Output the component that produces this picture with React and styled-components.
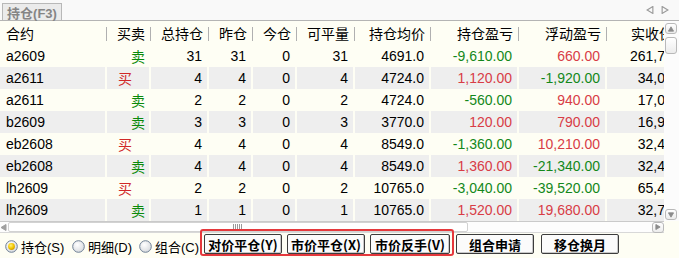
import React from 'react';
import styled, { createGlobalStyle } from 'styled-components';

const GlobalStyle = createGlobalStyle`
  html, body {
    margin: 0;
    padding: 0;
    background: #fefef4;
  }
  body {
    font-family: "Liberation Sans", "Noto Sans CJK SC", sans-serif;
    font-size: 14px;
    color: #000;
  }
`;

const CREAM = '#fefef4';
const RED = '#d83c46';
const GREEN = '#13881a';
const COLS = '107px 44px 58px 44px 44px 58px 76px 88px 88px 100px';

const Frame = styled.div`
  width: 679px;
  height: 258px;
  display: flex;
  flex-direction: column;
  overflow: hidden;
  background: ${CREAM};
`;

const TabBar = styled.div`
  height: 20px;
  flex: none;
  display: flex;
  align-items: flex-end;
  justify-content: space-between;
  background: #f9f9f9;
  border-bottom: 1px solid #b4b4b4;
  padding-left: 2px;
`;

const Tab = styled.div`
  height: 17px;
  width: 60px;
  box-sizing: border-box;
  border: 1px solid #b8b8b8;
  border-bottom: none;
  background: #ebebeb;
  color: #858585;
  font-size: 13px;
  font-weight: bold;
  display: flex;
  align-items: center;
  justify-content: center;
`;

const TabArrows = styled.div`
  display: flex;
  gap: 7px;
  align-self: center;
  padding-right: 10px;
`;

const Body = styled.div`
  display: flex;
  height: 200px;
  flex: none;
`;

const GridArea = styled.div`
  width: 664px;
  overflow: hidden;
  flex: none;
`;

const Grid = styled.div`
  width: 707px;
`;

const HeadRow = styled.div`
  display: grid;
  grid-template-columns: ${COLS};
  height: 24px;
  background: ${CREAM};
`;

const HeadCell = styled.div`
  position: relative;
  display: flex;
  align-items: center;
  justify-content: ${p => (p.$left ? 'flex-start' : 'flex-end')};
  padding: ${p => (p.$left ? '0 0 0 6px' : '0 6px 0 0')};
  white-space: nowrap;
  overflow: hidden;
  &::after {
    content: '';
    position: absolute;
    right: 0;
    top: 6px;
    width: 1px;
    height: 14px;
    background: #b0b0b0;
  }
`;

const Row = styled.div`
  display: grid;
  grid-template-columns: ${COLS};
  height: 22px;
  background: ${p => (p.$alt ? '#eeeeee' : CREAM)};
`;

const Cell = styled.div`
  display: flex;
  align-items: center;
  justify-content: ${p => (p.$left ? 'flex-start' : 'flex-end')};
  padding: ${p => (p.$left ? '0 0 0 6px' : '0 5px 0 0')};
  border-right: 2px solid ${CREAM};
  color: ${p => p.$color || '#000'};
  white-space: nowrap;
  overflow: hidden;
`;

const SideCell = styled(Cell)`
  justify-content: ${p => (p.$buy ? 'flex-start' : 'flex-end')};
  padding: ${p => (p.$buy ? '0 0 0 11px' : '0 4px 0 0')};
  color: ${p => (p.$buy ? '#d02828' : '#0a8a0a')};
`;

const VScroll = styled.div`
  width: 15px;
  flex: none;
  background: #fcfcfc;
  display: flex;
  flex-direction: column;
  align-items: center;
  padding: 2px 1px 1px 0;
  box-sizing: border-box;
`;

const ScrollBtn = styled.div`
  width: 12px;
  height: ${p => p.$h || 11}px;
  box-sizing: border-box;
  border: 1px solid #b9b9b9;
  border-radius: 3px;
  background: linear-gradient(#ffffff, #ececec);
  display: flex;
  align-items: center;
  justify-content: center;
  flex: none;
  margin-bottom: ${p => p.$mb || 0}px;
`;

const Spacer = styled.div`
  flex: 1;
`;

const HScrollRow = styled.div`
  display: flex;
  height: 12px;
  flex: none;
`;

const HScroll = styled.div`
  width: 664px;
  box-sizing: border-box;
  border-top: 1px solid #cacaca;
  border-bottom: 1px solid #d8d8d8;
  background: #fdfdfd;
  display: flex;
  align-items: center;
`;

const HThumb = styled.div`
  width: 460px;
  height: 10px;
  box-sizing: border-box;
  border: 1px solid #d2d2d2;
  border-radius: 2px;
  background: #ffffff;
  display: flex;
  align-items: center;
  justify-content: center;
  margin-left: 1px;
`;

const Bottom = styled.div`
  flex: 1;
  display: flex;
  align-items: flex-start;
  padding: 1px 0 0 5px;
  background: ${CREAM};
`;

const RadioItem = styled.label`
  width: 67px;
  flex: none;
  display: flex;
  align-items: center;
  gap: 3px;
  height: 20px;
  margin-top: 2px;
  font-size: 13px;
  white-space: nowrap;
`;

const HighlightBox = styled.div`
  display: flex;
  gap: 5px;
  margin-top: -5px;
  padding: 3px 2px 0 2px;
  height: 27px;
  box-sizing: border-box;
  border: 2px solid #e5383c;
  border-radius: 3px;
  margin-left: -6px;
`;

const Button = styled.button`
  width: ${p => p.$w || 78}px;
  height: 20px;
  flex: none;
  padding: 0;
  margin: 0 0 0 ${p => p.$ml || 0}px;
  box-sizing: border-box;
  border: 1px solid #3c3c3c;
  border-radius: 2px;
  background: #fbfbfb;
  box-shadow: inset -1px -1px 0 #c8c8c8;
  font-family: "Noto Sans CJK SC", "Liberation Sans", sans-serif;
  font-size: 13px;
  font-weight: bold;
  color: #000;
  white-space: nowrap;
`;

const Tri = ({ dir, filled, color = '#8a8a8a', size = 7 }) => {
  const pts = {
    up: '0.5,6 3.5,1 6.5,6',
    down: '0.5,1 3.5,6 6.5,1',
    left: '6,0.5 1,3.5 6,6.5',
    right: '1,0.5 6,3.5 1,6.5',
  }[dir];
  return (
    <svg width={size} height={size} viewBox="0 0 7 7">
      <polygon points={pts} fill={filled ? color : 'none'} stroke={color} strokeWidth="1" />
    </svg>
  );
};

const Radio = ({ checked }) => (
  <svg width="13" height="13" viewBox="0 0 13 13">
    <defs>
      <radialGradient id="rfill" cx="0.4" cy="0.35" r="0.7">
        <stop offset="0" stopColor="#ffffff" />
        <stop offset="1" stopColor="#d6d9dd" />
      </radialGradient>
      <radialGradient id="rdot" cx="0.4" cy="0.35" r="0.7">
        <stop offset="0" stopColor="#fff27a" />
        <stop offset="0.6" stopColor="#f2c600" />
        <stop offset="1" stopColor="#c99600" />
      </radialGradient>
    </defs>
    <circle cx="6.5" cy="6.5" r="5.8" fill="url(#rfill)" stroke="#6f8096" strokeWidth="1" />
    {checked && <circle cx="6.5" cy="6.5" r="3.4" fill="url(#rdot)" />}
  </svg>
);

const Grip = () => (
  <svg width="10" height="6" viewBox="0 0 10 6">
    {[0.5, 2.5, 4.5, 6.5, 8.5].map(x => (
      <line key={x} x1={x} y1="0" x2={x} y2="6" stroke="#9a9a9a" strokeWidth="1" />
    ))}
  </svg>
);

const headers = ['合约', '买卖', '总持仓', '昨仓', '今仓', '可平量', '持仓均价', '持仓盈亏', '浮动盈亏', '实收保证金'];

const rows = [
  ['a2609', '卖', 31, 31, 0, 31, '4691.0', '-9,610.00', '660.00', '261,760.00'],
  ['a2611', '买', 4, 4, 0, 4, '4724.0', '1,120.00', '-1,920.00', '34,012.80'],
  ['a2611', '卖', 2, 2, 0, 2, '4724.0', '-560.00', '940.00', '17,006.40'],
  ['b2609', '卖', 3, 3, 0, 3, '3770.0', '120.00', '790.00', '16,965.00'],
  ['eb2608', '买', 4, 4, 0, 4, '8549.0', '-1,360.00', '10,210.00', '32,486.20'],
  ['eb2608', '卖', 4, 4, 0, 4, '8549.0', '1,360.00', '-21,340.00', '32,486.20'],
  ['lh2609', '买', 2, 2, 0, 2, '10765.0', '-3,040.00', '-39,520.00', '65,412.00'],
  ['lh2609', '卖', 1, 1, 0, 1, '10765.0', '1,520.00', '19,680.00', '32,706.00'],
];

const tone = v => (v.startsWith('-') ? GREEN : RED);

export default function App() {
  return (
    <Frame>
      <GlobalStyle />
      <TabBar>
        <Tab>持仓(F3)</Tab>
        <TabArrows>
          <Tri dir="left" color="#9a9a9a" size={8} />
          <Tri dir="right" color="#9a9a9a" size={8} />
        </TabArrows>
      </TabBar>

      <Body>
        <GridArea>
          <Grid>
            <HeadRow>
              {headers.map((h, i) => (
                <HeadCell key={h} $left={i === 0}>{h}</HeadCell>
              ))}
            </HeadRow>
            {rows.map((r, i) => (
              <Row key={i} $alt={i % 2 === 1}>
                <Cell $left>{r[0]}</Cell>
                <SideCell $buy={r[1] === '买'}>{r[1]}</SideCell>
                <Cell>{r[2]}</Cell>
                <Cell>{r[3]}</Cell>
                <Cell>{r[4]}</Cell>
                <Cell>{r[5]}</Cell>
                <Cell>{r[6]}</Cell>
                <Cell $color={tone(r[7])}>{r[7]}</Cell>
                <Cell $color={tone(r[8])}>{r[8]}</Cell>
                <Cell>{r[9]}</Cell>
              </Row>
            ))}
          </Grid>
        </GridArea>
        <VScroll>
          <ScrollBtn $mb={3}><Tri dir="up" filled color="#8c8c8c" size={6} /></ScrollBtn>
          <ScrollBtn $h={17} />
          <Spacer />
          <ScrollBtn><Tri dir="down" filled color="#8c8c8c" size={6} /></ScrollBtn>
        </VScroll>
      </Body>

      <HScrollRow>
        <HScroll>
          <Tri dir="left" filled color="#a0a0a0" size={7} />
          <HThumb><Grip /></HThumb>
          <Spacer />
          <ScrollBtn $h={11}><Tri dir="right" filled color="#8c8c8c" size={6} /></ScrollBtn>
        </HScroll>
      </HScrollRow>

      <Bottom>
        <RadioItem><Radio checked />持仓(S)</RadioItem>
        <RadioItem><Radio />明细(D)</RadioItem>
        <RadioItem><Radio />组合(C)</RadioItem>
        <HighlightBox>
          <Button>对价平仓(Y)</Button>
          <Button>市价平仓(X)</Button>
          <Button $w={80}>市价反手(V)</Button>
        </HighlightBox>
        <Button $ml={2}>组合申请</Button>
        <Button $ml={7}>移仓换月</Button>
      </Bottom>
    </Frame>
  );
}
